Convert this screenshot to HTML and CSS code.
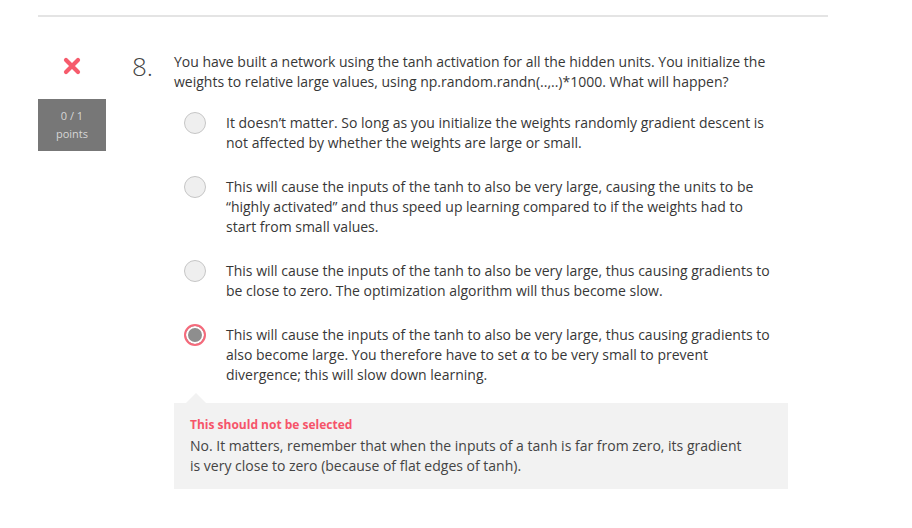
FILE: index.html
```html
<!DOCTYPE html>
<html>
<head>
<meta charset="utf-8">
<link rel="stylesheet" href="styles.css">
</head>
<body>
<div class="page">
  <div class="rule"></div>
  <div class="question">
    <div class="status">
      <svg class="cross" width="18" height="18" viewBox="0 0 18 18">
        <path d="M3 3 L15 15 M15 3 L3 15" stroke="#f65b6c" stroke-width="4.2" stroke-linecap="round"/>
      </svg>
      <div class="score">0 / 1<br>points</div>
    </div>
    <div class="number">8.</div>
    <div class="body">
      <p class="prompt">You have built a network using the tanh activation for all the hidden units. You initialize the weights to relative large values, using np.random.randn(..,..)*1000. What will happen?</p>
      <div class="options">
        <div class="option">
          <span class="radio"></span>
          <span class="label">It doesn’t matter. So long as you initialize the weights randomly gradient descent is not affected by whether the weights are large or small.</span>
        </div>
        <div class="option">
          <span class="radio"></span>
          <span class="label">This will cause the inputs of the tanh to also be very large, causing the units to be “highly activated” and thus speed up learning compared to if the weights had to start from small values.</span>
        </div>
        <div class="option">
          <span class="radio"></span>
          <span class="label">This will cause the inputs of the tanh to also be very large, thus causing gradients to be close to zero. The optimization algorithm will thus become slow.</span>
        </div>
        <div class="option">
          <span class="radio selected"></span>
          <span class="label">This will cause the inputs of the tanh to also be very large, thus causing gradients to also become large. You therefore have to set <span class="math">α</span> to be very small to prevent divergence; this will slow down learning.</span>
        </div>
      </div>
      <div class="feedback">
        <div class="feedback-title">This should not be selected</div>
        <div class="feedback-text">No. It matters, remember that when the inputs of a tanh is far from zero, its gradient is very close to zero (because of flat edges of tanh).</div>
      </div>
    </div>
  </div>
</div>
</body>
</html>
```
FILE: styles.css
```css
html, body {
  margin: 0;
  padding: 0;
  background: #fff;
}
body {
  font-family: "Open Sans", "Liberation Sans", sans-serif;
  font-size: 14px;
  line-height: 20px;
  color: #373737;
}
.page {
  width: 790px;
  margin-left: 38px;
  padding-top: 15px;
}
.rule {
  height: 2px;
  background: #e4e4e4;
}
.question {
  display: flex;
  margin-top: 33px;
}
.status {
  width: 68px;
  display: flex;
  flex-direction: column;
  align-items: center;
}
.cross {
  margin-top: 7px;
  display: block;
}
.score {
  margin-top: 24px;
  width: 68px;
  height: 52px;
  box-sizing: border-box;
  padding-top: 8px;
  background: #777777;
  color: #d6d6d6;
  font-size: 11px;
  line-height: 18px;
  text-align: center;
}
.number {
  width: 42px;
  margin-left: 26px;
  font-size: 26px;
  font-weight: 300;
  line-height: 30px;
  color: #444;
  margin-top: 1px;
}
.body {
  width: 614px;
}
.prompt {
  margin: 2px 0 0;
  padding-right: 16px;
}
.options {
  margin-top: 21px;
  display: flex;
  flex-direction: column;
  gap: 24px;
  padding-left: 10px;
}
.option {
  display: flex;
  align-items: flex-start;
}
.radio {
  flex: none;
  width: 22px;
  height: 22px;
  box-sizing: border-box;
  border: 1px solid #c6c6c6;
  border-radius: 50%;
  background: #efefef;
  margin-top: -1px;
  margin-right: 20px;
}
.radio.selected {
  border: 2px solid #f56a7b;
  background: #8e8e8e;
  box-shadow: inset 0 0 0 2px #fff;
}
.label {
  width: 548px;
}
.math {
  font-family: "DejaVu Serif", "Liberation Serif", serif;
  font-style: italic;
  font-size: 14px;
}
.feedback {
  position: relative;
  margin-top: 18px;
  background: #f2f2f2;
  padding: 13px 16px 13px;
  color: #444;
}
.feedback::before {
  content: "";
  position: absolute;
  left: 12px;
  top: -10px;
  border-left: 10px solid transparent;
  border-right: 10px solid transparent;
  border-bottom: 10px solid #f2f2f2;
}
.feedback-title {
  color: #f6546a;
  font-weight: 700;
  font-size: 12px;
  line-height: 18px;
  margin-bottom: 2px;
}
.feedback-text {
  width: 556px;
}
```
